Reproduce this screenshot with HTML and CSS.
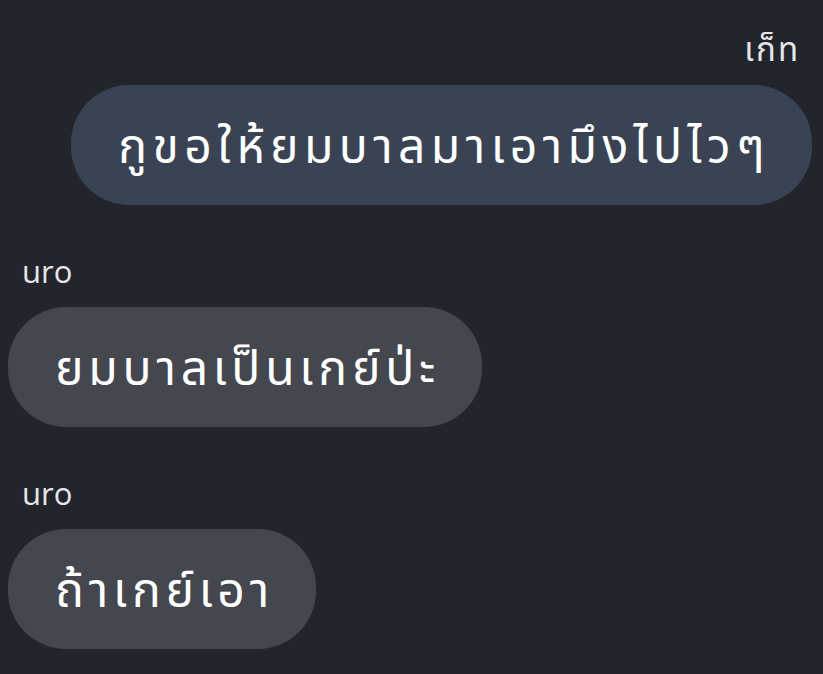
FILE: index.html
```html
<!DOCTYPE html>
<html lang="th">
<head>
    <meta charset="UTF-8">
    <meta name="viewport" content="width=device-width, initial-scale=1.0">
    <title>Chat</title>
    <link rel="stylesheet" href="styles.css">
</head>
<body>
    <div class="chat">
        <!-- Sent message -->
        <div class="message sent">
            <div class="sender">เก็ท</div>
            <div class="bubble">กูขอให้ยมบาลมาเอามึงไปไวๆ</div>
        </div>

        <!-- Received messages -->
        <div class="message received">
            <div class="sender">uro</div>
            <div class="bubble">ยมบาลเป็นเกย์ป่ะ</div>
        </div>

        <div class="message received">
            <div class="sender">uro</div>
            <div class="bubble">ถ้าเกย์เอา</div>
        </div>
    </div>
</body>
</html>
```

FILE: styles.css
```css
/* Page */
body {
    margin: 0;
    background-color: #23252c;
    font-family: "Open Sans", "Noto Sans Thai", sans-serif;
    color: #ffffff;
}

.chat {
    display: flex;
    flex-direction: column;
    gap: 44px;
    padding: 27px 11px 0 8px;
}

/* Message group */
.message {
    display: flex;
    flex-direction: column;
    gap: 14px;
}

.message.sent {
    align-items: flex-end;
}

.message.received {
    align-items: flex-start;
}

.sender {
    font-size: 31px;
    line-height: 44px;
    color: #e6e7ea;
    padding: 0 14px;
}

.message.sent .sender {
    font-size: 33px;
    letter-spacing: 2px;
    padding-right: 12px;
}

/* Bubbles */
.bubble {
    font-size: 48px;
    line-height: 120px;
    height: 120px;
    padding: 0 42px 0 47px;
    letter-spacing: 4.8px;
    border-radius: 58px;
    white-space: nowrap;
}

.message.sent .bubble {
    letter-spacing: 5.4px;
    background-color: #3a4353;
}

.message.received .bubble {
    background-color: #45474f;
}
```
